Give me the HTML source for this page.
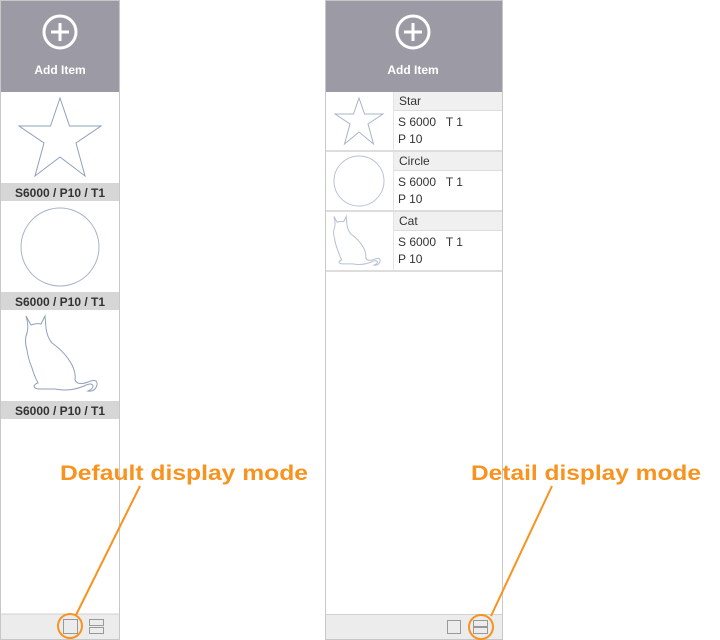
<!DOCTYPE html>
<html><head><meta charset="utf-8"><style>
body{margin:0;width:720px;height:640px;background:#fff;position:relative;overflow:hidden;font-family:"Liberation Sans",sans-serif}
.a{position:absolute}
</style></head><body>
<svg class="a" style="left:0;top:0" width="720" height="640" xmlns="http://www.w3.org/2000/svg">
<!-- left panel -->
<rect x="0.5" y="0.5" width="119" height="639" fill="#fff" stroke="#c8c8c8"/>
<rect x="1" y="1" width="118" height="91" fill="#9c9ba5"/>
<circle cx="60" cy="32" r="16" fill="none" stroke="#fff" stroke-width="3"/>
<path d="M60 23v18M51 32h18" stroke="#fff" stroke-width="3"/>
<text x="60" y="74" fill="#fff" font-size="12" font-weight="bold" text-anchor="middle">Add Item</text>
<polygon points="60,98 69.5,126 101,126 76,143 85,176 60,157 35,176 44,143 19,126 50.5,126" fill="none" stroke="#8fa0bb" stroke-width="1"/>
<rect x="1" y="183" width="118" height="18" fill="#d6d6d6"/>
<text x="60" y="197" font-size="12" font-weight="bold" fill="#333" text-anchor="middle">S6000 / P10 / T1</text>
<circle cx="60" cy="247" r="39" fill="none" stroke="#a8b4c8"/>
<rect x="1" y="292" width="118" height="18" fill="#d6d6d6"/>
<text x="60" y="306" font-size="12" font-weight="bold" fill="#333" text-anchor="middle">S6000 / P10 / T1</text>
<path d="M26,316 L31,325 Q36,323 41,324 L45,316 L46,328 Q47,337 52,343 Q65,352 72,365 Q76,373 75,380 Q78,386 88,382 Q98,378 97,385 Q95,392 88,391 Q93,389 93,386 Q92,382 84,386 Q70,392 55,389 L40,389 Q34,389 34,386 Q36,383 38,383 Q34,375 32,368 Q28,358 27,350 Q24,340 27,333 Q29,326 26,316 Z" fill="none" stroke="#8fa0bb"/>
<rect x="1" y="401" width="118" height="18" fill="#d6d6d6"/>
<text x="60" y="415" font-size="12" font-weight="bold" fill="#333" text-anchor="middle">S6000 / P10 / T1</text>
<rect x="1" y="614" width="118" height="25" fill="#ececec"/>
<line x1="1" y1="614" x2="119" y2="614" stroke="#d0d0d0"/>
<rect x="63.5" y="619.5" width="14" height="14" fill="none" stroke="#999"/>
<rect x="89.5" y="619.5" width="14" height="6" fill="none" stroke="#999"/>
<rect x="89.5" y="627.5" width="14" height="6" fill="none" stroke="#999"/>

<!-- right panel -->
<rect x="325.5" y="0.5" width="177" height="639" fill="#fff" stroke="#c8c8c8"/>
<rect x="326" y="1" width="176" height="91" fill="#9c9ba5"/>
<circle cx="413" cy="32" r="16" fill="none" stroke="#fff" stroke-width="3"/>
<path d="M413 23v18M404 32h18" stroke="#fff" stroke-width="3"/>
<text x="413" y="74" fill="#fff" font-size="12" font-weight="bold" text-anchor="middle">Add Item</text>
<g font-size="12" fill="#333">
<rect x="394" y="92" width="108" height="18" fill="#f0f0f0"/>
<line x1="394" y1="110.5" x2="502" y2="110.5" stroke="#ddd"/>
<line x1="393.5" y1="92" x2="393.5" y2="151" stroke="#e4e4e4"/>
<text x="399" y="105">Star</text>
<text x="398" y="126">S 6000 &#160; T 1</text>
<text x="398" y="143">P 10</text>
<line x1="326" y1="151" x2="502" y2="151" stroke="#ddd" stroke-width="2"/>
<polygon points="359,98 364.5,114 383,114 368,124 373.5,144 359,132 344.5,144 350,124 335,114 353.5,114" fill="none" stroke="#a8b4c8"/>

<rect x="394" y="152" width="108" height="18" fill="#f0f0f0"/>
<line x1="394" y1="170.5" x2="502" y2="170.5" stroke="#ddd"/>
<line x1="393.5" y1="152" x2="393.5" y2="211" stroke="#e4e4e4"/>
<text x="399" y="165">Circle</text>
<text x="398" y="186">S 6000 &#160; T 1</text>
<text x="398" y="203">P 10</text>
<circle cx="359" cy="181" r="25" fill="none" stroke="#b8c2d4"/>
<line x1="326" y1="211" x2="502" y2="211" stroke="#ddd" stroke-width="2"/>

<rect x="394" y="212" width="108" height="18" fill="#f0f0f0"/>
<line x1="394" y1="230.5" x2="502" y2="230.5" stroke="#ddd"/>
<line x1="393.5" y1="212" x2="393.5" y2="271" stroke="#e4e4e4"/>
<text x="399" y="225">Cat</text>
<text x="398" y="246">S 6000 &#160; T 1</text>
<text x="398" y="263">P 10</text>
<g transform="translate(317,11) scale(0.65)">
<path d="M26,316 L31,325 Q36,323 41,324 L45,316 L46,328 Q47,337 52,343 Q65,352 72,365 Q76,373 75,380 Q78,386 88,382 Q98,378 97,385 Q95,392 88,391 Q93,389 93,386 Q92,382 84,386 Q70,392 55,389 L40,389 Q34,389 34,386 Q36,383 38,383 Q34,375 32,368 Q28,358 27,350 Q24,340 27,333 Q29,326 26,316 Z" fill="none" stroke="#b8c2d4" stroke-width="1.6"/>
</g>
<line x1="326" y1="271" x2="502" y2="271" stroke="#ddd" stroke-width="2"/>
</g>
<rect x="326" y="615" width="176" height="24" fill="#ececec"/>
<line x1="326" y1="614.5" x2="502" y2="614.5" stroke="#d0d0d0"/>
<rect x="447.5" y="620.5" width="13" height="13" fill="none" stroke="#999"/>
<rect x="473.5" y="620.5" width="14" height="6" fill="none" stroke="#999"/>
<rect x="473.5" y="627.5" width="14" height="6" fill="none" stroke="#999"/>

<!-- annotations -->
<g stroke="#f7931e" stroke-width="2" fill="none">
<circle cx="70" cy="626" r="12"/>
<line x1="76" y1="615" x2="140" y2="486"/>
<circle cx="481" cy="627" r="12"/>
<line x1="491" y1="616" x2="552" y2="486"/>
</g>
<text x="60" y="480" fill="#f7931e" font-size="21" font-weight="bold" textLength="248" lengthAdjust="spacingAndGlyphs">Default display mode</text>
<text x="471" y="480" fill="#f7931e" font-size="21" font-weight="bold" textLength="230" lengthAdjust="spacingAndGlyphs">Detail display mode</text>
</svg>
</body></html>
